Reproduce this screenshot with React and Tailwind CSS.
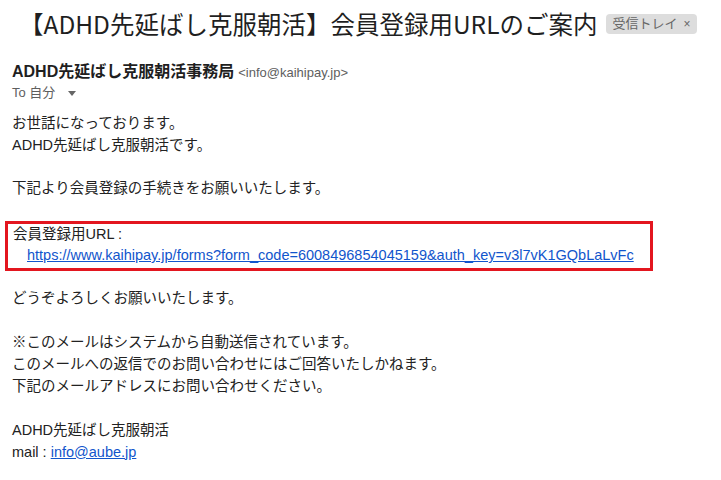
/**
 * App.jsx — メール表示（会員登録URLのご案内）
 */

const body = "font-['Liberation_Sans','Noto_Sans_CJK_JP',sans-serif]";

export default function App() {
  return (
    <div className={`w-[721px] h-[480px] bg-white text-[#222] overflow-hidden ${body}`}>
      {/* 件名 */}
      <div className="flex items-center pl-[19px] pt-[6px] h-[42px]">
        <h2 className="text-[24.5px] leading-[30px] font-['Noto_Sans_CJK_JP',sans-serif] text-[#1f1f1f] whitespace-nowrap">
          【ADHD先延ばし克服朝活】会員登録用URLのご案内
        </h2>
        <span className="ml-[9px] flex items-center h-[20px] px-[6px] rounded-[4px] bg-[#dddddd] text-[13px] text-[#666] whitespace-nowrap">
          受信トレイ<span className="ml-[6px] text-[12px]">×</span>
        </span>
      </div>

      {/* 差出人 */}
      <div className="pl-[12px] pt-[20px]">
        <div className="flex items-baseline whitespace-nowrap leading-[20px]">
          <span className="text-[16px] font-bold text-[#1f1f1f]">ADHD先延ばし克服朝活事務局</span>
          <span className="ml-[4px] text-[13px] text-[#5e5e5e]">&lt;info@kaihipay.jp&gt;</span>
        </div>
        <div className="flex items-center text-[13px] text-[#5e5e5e] leading-[20px]">
          To 自分
          <svg className="ml-[13px]" width="8" height="5" viewBox="0 0 8 5">
            <path d="M0 0h8L4 5z" fill="#666" />
          </svg>
        </div>
      </div>

      {/* 本文 */}
      <div className="pl-[12px] pt-[10px] text-[14.5px] text-[#222]">
        <div className="leading-[21.5px]">
          <p>お世話になっております。</p>
          <p>ADHD先延ばし克服朝活です。</p>
          <p>&nbsp;</p>
          <p>下記より会員登録の手続きをお願いいたします。</p>
          <p>&nbsp;</p>

          {/* URL枠 */}
          <div className="-ml-[7px] w-[648px] border-[3px] border-[#e3161f] pl-[5px] pb-[1px]">
            <p>会員登録用URL :</p>
            <p className="whitespace-nowrap pl-[14px]">
              <a href="#" className="text-[#1155cc] underline">https://www.kaihipay.jp/forms?form_code=6008496854045159&amp;auth_key=v3l7vK1GQbLaLvFc</a>
            </p>
          </div>
        </div>

        <div className="leading-[22px] mt-[16px]">
          <p>どうぞよろしくお願いいたします。</p>
          <p>&nbsp;</p>
          <p>※このメールはシステムから自動送信されています。</p>
          <p>このメールへの返信でのお問い合わせにはご回答いたしかねます。</p>
          <p>下記のメールアドレスにお問い合わせください。</p>
          <p>&nbsp;</p>
          <p>ADHD先延ばし克服朝活</p>
          <p>
            mail : <a href="#" className="text-[#1155cc] underline">info@aube.jp</a>
          </p>
        </div>
      </div>
    </div>
  );
}
